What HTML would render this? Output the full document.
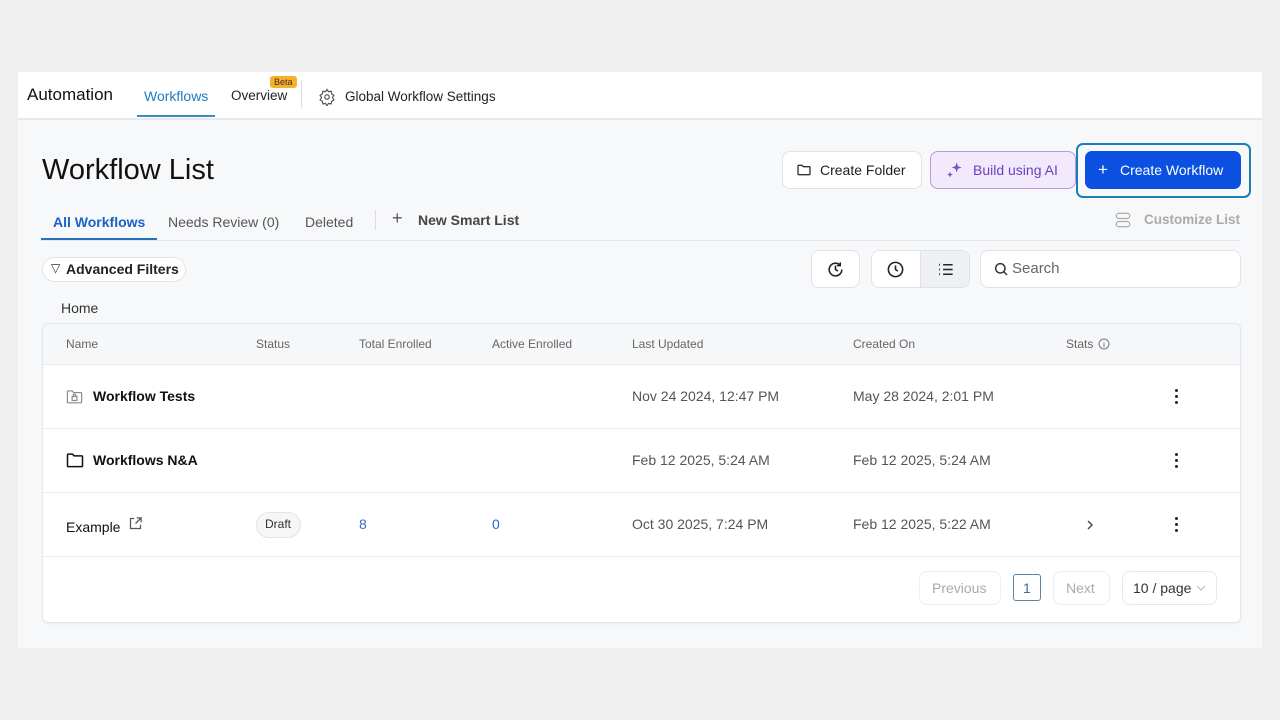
<!DOCTYPE html>
<html><head><meta charset="utf-8"><style>
*{box-sizing:border-box;margin:0;padding:0}
body{width:1280px;height:720px;background:#efefef;font-family:"Liberation Sans",sans-serif;position:relative;overflow:hidden;color:#111}
.a{position:absolute}
.panel{left:18px;top:72px;width:1244px;height:576px;background:#f7f8fa}
.hdr{left:18px;top:72px;width:1244px;height:48px;background:#fff;border-bottom:2px solid #e6e8eb}
.t{position:absolute;white-space:nowrap}
.btn{position:absolute;border:1px solid #dfe2e6;border-radius:8px;background:#fff}
.th{position:absolute;top:337px;font-size:12px;color:#666}
.cell{position:absolute;font-size:14px;color:#555}
.dots{position:absolute;width:4px}
.dots i{display:block;width:3px;height:3px;background:#222;border-radius:50%;margin-bottom:3px}
</style></head><body>
<div class="a panel"></div>
<div class="a hdr"></div>
<div class="t" style="left:27px;top:85px;font-size:17px;color:#111">Automation</div>
<div class="t" style="left:144px;top:88px;font-size:14px;color:#1f7bc0">Workflows</div>
<div class="a" style="left:137px;top:115px;width:78px;height:2px;background:#3a8cc4"></div>
<div class="t" style="left:231px;top:88px;font-size:13.5px;color:#222">Overview</div>
<div class="t" style="left:270px;top:76px;font-size:9px;background:#f7b02a;color:#333;padding:0 4px;border-radius:3px;line-height:12px">Beta</div>
<div class="a" style="left:301px;top:80px;width:1px;height:28px;background:#ddd"></div>
<svg class="a" style="left:318px;top:88px" width="18" height="18" viewBox="0 0 24 24" fill="none" stroke="#555" stroke-width="1.6"><circle cx="12" cy="12" r="3"/><path d="M12 2l2 3 3.5-.7.7 3.5 3 2-2 3 2 3-3 2-.7 3.5-3.5-.7-2 3-2-3-3.5.7-.7-3.5-3-2 2-3-2-3 3-2 .7-3.5 3.5.7z"/></svg>
<div class="t" style="left:345px;top:89px;font-size:13.5px;color:#222">Global Workflow Settings</div>

<div class="t" style="left:42px;top:154px;font-size:29px;color:#111">Workflow List</div>

<div class="btn" style="left:782px;top:151px;width:140px;height:38px"></div>
<svg class="a" style="left:796px;top:162px" width="16" height="16" viewBox="0 0 24 24" fill="none" stroke="#333" stroke-width="2"><path d="M3 6a1 1 0 011-1h5l2 2h9a1 1 0 011 1v10a1 1 0 01-1 1H4a1 1 0 01-1-1z"/></svg>
<div class="t" style="left:820px;top:162px;font-size:14px;color:#222">Create Folder</div>
<div class="btn" style="left:930px;top:151px;width:146px;height:38px;background:#f3e9fd;border-color:#b79ad9"></div>
<svg class="a" style="left:945px;top:160px" width="20" height="20" viewBox="0 0 24 24" fill="#7a4fc9"><path d="M14 3l1.5 4.5L20 9l-4.5 1.5L14 15l-1.5-4.5L8 9l4.5-1.5z"/><path d="M6 14l1 2.5L9.5 17.5 7 18.5 6 21 5 18.5 2.5 17.5 5 16.5z"/></svg>
<div class="t" style="left:973px;top:162px;font-size:14px;color:#6a3fbf">Build using AI</div>
<div class="a" style="left:1076px;top:143px;width:175px;height:55px;border:2px solid #1a7fb3;border-radius:7px"></div>
<div class="a" style="left:1085px;top:151px;width:156px;height:38px;background:#0b50e0;border-radius:7px"></div>
<div class="t" style="left:1098px;top:160px;font-size:17px;color:#fff">+</div>
<div class="t" style="left:1120px;top:162px;font-size:14px;color:#fff">Create Workflow</div>

<div class="t" style="left:53px;top:214px;font-size:14px;color:#1a62c4;font-weight:bold">All Workflows</div>
<div class="a" style="left:41px;top:238px;width:116px;height:2px;background:#2a6fbf"></div>
<div class="t" style="left:168px;top:214px;font-size:14px;color:#555">Needs Review (0)</div>
<div class="t" style="left:305px;top:214px;font-size:14px;color:#555">Deleted</div>
<div class="a" style="left:375px;top:210px;width:1px;height:20px;background:#ddd"></div>
<div class="t" style="left:392px;top:208px;font-size:18px;color:#555">+</div>
<div class="t" style="left:418px;top:212px;font-size:14px;color:#444;font-weight:bold">New Smart List</div>
<div class="a" style="left:41px;top:240px;width:1200px;height:1px;background:#e4e6e9"></div>
<svg class="a" style="left:1114px;top:211px" width="18" height="18" viewBox="0 0 24 24" fill="none" stroke="#aaa" stroke-width="1.6"><rect x="3" y="3" width="18" height="7" rx="3.5"/><rect x="3" y="14" width="18" height="7" rx="3.5"/></svg>
<div class="t" style="left:1144px;top:212px;font-size:13.5px;color:#aaa;font-weight:bold">Customize List</div>

<div class="a" style="left:42px;top:257px;width:144px;height:25px;border:1px solid #e2e4e7;border-radius:13px;background:#fff"></div>
<div class="t" style="left:51px;top:261px;font-size:12px;color:#333">▽</div>
<div class="t" style="left:66px;top:261px;font-size:14px;color:#222;font-weight:bold">Advanced Filters</div>

<div class="btn" style="left:811px;top:250px;width:49px;height:38px"></div>
<svg class="a" style="left:826px;top:260px" width="19" height="19" viewBox="0 0 24 24" fill="none" stroke="#222" stroke-width="2"><path d="M20 12a8 8 0 11-3-6.2"/><path d="M12 7v5l3 2"/><path d="M18 3v4h-4"/></svg>
<div class="btn" style="left:871px;top:250px;width:99px;height:38px"></div>
<div class="a" style="left:920px;top:251px;width:49px;height:36px;background:#eef0f3;border-radius:0 7px 7px 0;border-left:1px solid #dfe2e6"></div>
<svg class="a" style="left:886px;top:260px" width="19" height="19" viewBox="0 0 24 24" fill="none" stroke="#222" stroke-width="2"><circle cx="12" cy="12" r="9"/><path d="M12 7v5l3 2"/></svg>
<svg class="a" style="left:936px;top:260px" width="19" height="19" viewBox="0 0 24 24" fill="none" stroke="#222" stroke-width="2"><path d="M9 6h12M9 12h12M9 18h12"/><path d="M4 6h1M4 12h1M4 18h1" stroke-width="2.6"/></svg>
<div class="btn" style="left:980px;top:250px;width:261px;height:38px"></div>
<svg class="a" style="left:993px;top:261px" width="16" height="16" viewBox="0 0 24 24" fill="none" stroke="#333" stroke-width="2.2"><circle cx="11" cy="11" r="7"/><path d="M16 16l5 5"/></svg>
<div class="t" style="left:1012px;top:260px;font-size:15px;color:#666">Search</div>

<div class="t" style="left:61px;top:300px;font-size:14px;color:#333">Home</div>

<div class="a" style="left:42px;top:323px;width:1199px;height:300px;background:#fff;border:1px solid #e4e6e9;border-radius:6px;box-shadow:0 1px 2px rgba(0,0,0,.05)"></div>
<div class="a" style="left:43px;top:324px;width:1197px;height:41px;background:#f6f7f9;border-bottom:1px solid #e8eaed;border-radius:6px 6px 0 0"></div>
<div class="th" style="left:66px">Name</div>
<div class="th" style="left:256px">Status</div>
<div class="th" style="left:359px">Total Enrolled</div>
<div class="th" style="left:492px">Active Enrolled</div>
<div class="th" style="left:632px">Last Updated</div>
<div class="th" style="left:853px">Created On</div>
<div class="th" style="left:1066px">Stats</div>
<svg class="a" style="left:1098px;top:338px" width="12" height="12" viewBox="0 0 12 12" fill="none" stroke="#777" stroke-width="1"><circle cx="6" cy="6" r="5"/><path d="M6 5v4M6 3.2v.6"/></svg>

<div class="a" style="left:43px;top:428px;width:1197px;height:1px;background:#e8eaed"></div>
<div class="a" style="left:43px;top:492px;width:1197px;height:1px;background:#e8eaed"></div>
<div class="a" style="left:43px;top:556px;width:1197px;height:1px;background:#e8eaed"></div>

<svg class="a" style="left:65px;top:387px" width="19" height="19" viewBox="0 0 24 24" fill="none" stroke="#888" stroke-width="1.5"><path d="M3 6a1 1 0 011-1h5l2 2h9a1 1 0 011 1v11a1 1 0 01-1 1H4a1 1 0 01-1-1z"/><rect x="9" y="12" width="6" height="5"/><path d="M10.5 12v-1.5a1.5 1.5 0 013 0V12"/></svg>
<div class="t" style="left:93px;top:388px;font-size:14px;color:#111;font-weight:bold">Workflow Tests</div>
<div class="cell" style="left:632px;top:388px">Nov 24 2024, 12:47 PM</div>
<div class="cell" style="left:853px;top:388px">May 28 2024, 2:01 PM</div>

<svg class="a" style="left:65px;top:450px" width="20" height="20" viewBox="0 0 24 24" fill="none" stroke="#111" stroke-width="1.8"><path d="M3 6a1 1 0 011-1h5l2 2h9a1 1 0 011 1v11a1 1 0 01-1 1H4a1 1 0 01-1-1z"/></svg>
<div class="t" style="left:93px;top:452px;font-size:14px;color:#111;font-weight:bold">Workflows N&amp;A</div>
<div class="cell" style="left:632px;top:452px">Feb 12 2025, 5:24 AM</div>
<div class="cell" style="left:853px;top:452px">Feb 12 2025, 5:24 AM</div>

<div class="t" style="left:66px;top:519px;font-size:14px;color:#111">Example</div>
<svg class="a" style="left:128px;top:516px" width="15" height="15" viewBox="0 0 24 24" fill="none" stroke="#555" stroke-width="2"><path d="M10 4H4v16h16v-6"/><path d="M14 3h7v7M21 3l-9 9"/></svg>
<div class="a" style="left:256px;top:512px;width:45px;height:26px;border:1px solid #e2e4e7;border-radius:13px;background:#f5f6f7"></div>
<div class="t" style="left:265px;top:517px;font-size:12px;color:#333">Draft</div>
<div class="cell" style="left:359px;top:516px;color:#3b6fc4">8</div>
<div class="cell" style="left:492px;top:516px;color:#1a6bd0">0</div>
<div class="cell" style="left:632px;top:516px">Oct 30 2025, 7:24 PM</div>
<div class="cell" style="left:853px;top:516px">Feb 12 2025, 5:22 AM</div>
<svg class="a" style="left:1086px;top:519px" width="8" height="12" viewBox="0 0 8 12" fill="none" stroke="#444" stroke-width="1.4"><path d="M2 2l4 4-4 4"/></svg>

<div class="dots" style="left:1175px;top:389px"><i></i><i></i><i></i></div>
<div class="dots" style="left:1175px;top:453px"><i></i><i></i><i></i></div>
<div class="dots" style="left:1175px;top:517px"><i></i><i></i><i></i></div>

<div class="btn" style="left:919px;top:571px;width:82px;height:34px;border-color:#eceef0"></div>
<div class="t" style="left:932px;top:580px;font-size:14px;color:#aaa">Previous</div>
<div class="a" style="left:1013px;top:574px;width:28px;height:27px;border:1px solid #5a86a8;border-radius:3px"></div>
<div class="t" style="left:1023px;top:580px;font-size:14px;color:#3d6d94">1</div>
<div class="btn" style="left:1053px;top:571px;width:57px;height:34px;border-color:#eceef0"></div>
<div class="t" style="left:1066px;top:580px;font-size:14px;color:#aaa">Next</div>
<div class="btn" style="left:1122px;top:571px;width:95px;height:34px;border-color:#e6e8eb"></div>
<div class="t" style="left:1133px;top:580px;font-size:14px;color:#333">10 / page</div>
<svg class="a" style="left:1196px;top:585px" width="10" height="6" viewBox="0 0 10 6" fill="none" stroke="#bbb" stroke-width="1"><path d="M1 1l4 4 4-4"/></svg>
</body></html>
